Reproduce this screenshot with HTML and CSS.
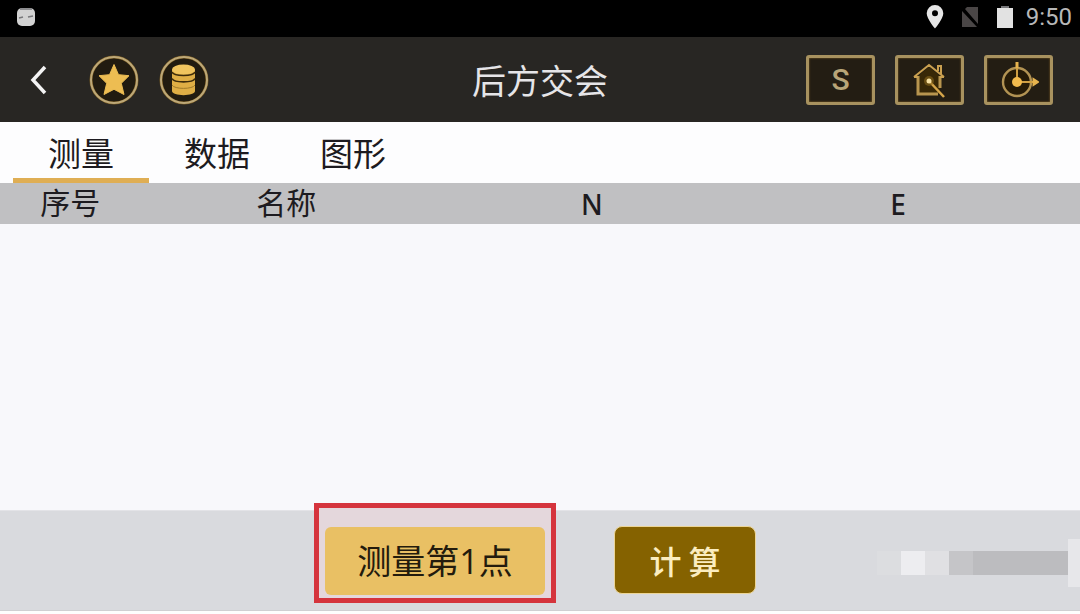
FILE: index.html
```html
<!DOCTYPE html>
<html lang="zh-CN">
<head>
<meta charset="utf-8">
<meta name="viewport" content="width=device-width, initial-scale=1">
<title>后方交会</title>
<link rel="stylesheet" href="styles.css">
</head>
<body>
<div class="app">
  <div class="status-bar">
    <svg class="status-app" width="20" height="20" viewBox="0 0 20 20" aria-hidden="true">
      <rect x="1" y="1" width="18" height="18" rx="5" fill="#d2d2d2"/>
      <path d="M4 2h12M3 11l4-1M12 10l5-1" stroke="#77777a" stroke-width="1.500" fill="none"/>
    </svg>
    <div class="status-right">
      <svg width="18" height="24" viewBox="0 0 18 24" aria-hidden="true">
        <path fill="#e6e6e6" fill-rule="evenodd" d="M9 0a8.300 8.300 0 0 0-8.300 8.300C.7 14 9 23.500 9 23.500S17.300 14 17.300 8.300A8.300 8.300 0 0 0 9 0zm0 5.300a3 3 0 1 1 0 6 3 3 0 0 1 0-6z"/>
      </svg>
      <svg width="18" height="22" viewBox="0 0 18 22" aria-hidden="true">
        <path fill="#4a4646" d="M6 1h11v17L4 3zM1 5l15 16H1z"/>
      </svg>
      <svg width="18" height="22" viewBox="0 0 18 22" aria-hidden="true">
        <path fill="#e2e2e2" d="M1 2h4V0h8v2h4v20H1z"/>
        <path fill="#77777a" d="M5 0h8v2H5z"/>
      </svg>
      <span class="clock">9:50</span>
    </div>
  </div>

  <header class="title-bar">
    <div class="title-left">
      <button class="icon-button back" type="button" aria-label="返回">
        <svg width="20" height="32" viewBox="0 0 20 32"><path d="M18 3L6 16l12 13" fill="none" stroke="#f4f4f4" stroke-width="3.500"/></svg>
      </button>
      <button class="icon-button" type="button" aria-label="收藏">
        <svg width="50" height="50" viewBox="0 0 50 50">
          <circle cx="25" cy="25" r="23" fill="#211b10" stroke="#7a5c22" stroke-width="3"/>
          <circle cx="25" cy="25" r="23" fill="none" stroke="#bda878" stroke-width="2"/>
          <path fill="#edbd52" stroke="#edbd52" stroke-linejoin="round" d="M25 9.500l4.500 10.200 10.500 1-7.700 7.600 2.700 11.200-10-5.200-10 5.200 2.700-11.200L10 20.700l10.500-1z"/>
        </svg>
      </button>
      <button class="icon-button" type="button" aria-label="数据库">
        <svg width="50" height="50" viewBox="0 0 50 50">
          <circle cx="25" cy="25" r="23" fill="#211b10" stroke="#7a5c22" stroke-width="3"/>
          <circle cx="25" cy="25" r="23" fill="none" stroke="#bda878" stroke-width="2"/>
          <path fill="#dfae45" d="M13 14.500h23V36c0 5.500-23 5.500-23 0z"/>
          <ellipse cx="24.500" cy="14.500" rx="11.500" ry="5" fill="#f0c45e"/>
          <path d="M13 17c2 4.700 21 4.700 23 0M13 23.500c2 4.500 21 4.500 23 0" fill="none" stroke="#3c2b0b" stroke-width="1.600"/>
          <path d="M13 30c2 4.500 21 4.500 23 0" fill="none" stroke="#a07b2a"/>
        </svg>
      </button>
    </div>
    <h1 class="title">后方交会</h1>
    <div class="title-right">
      <button class="tool" type="button">S</button>
      <button class="tool" type="button" aria-label="测站">
        <svg width="34" height="38" viewBox="0 0 34 38">
          <path fill="#382807" d="M5 15L16 6l11 9v18H5z"/>
          <path d="M5 15v18h20M27 15v12" fill="none" stroke="#b8954f" stroke-width="3"/>
          <path d="M1 16L16 4l15 12M1 16h4M27 16h4M25 10V5h3v8" fill="none" stroke="#caa050" stroke-width="2"/>
          <path d="M16 20l15 16" stroke="#d5a54a" stroke-width="2.500"/>
          <circle cx="16" cy="20" r="5" fill="#8b671d" opacity=".6"/>
          <circle cx="16" cy="20" r="2.500" fill="#f7e1a2"/>
        </svg>
      </button>
      <button class="tool" type="button" aria-label="定向">
        <svg width="40" height="40" viewBox="0 0 40 40">
          <circle cx="18" cy="22" r="14" fill="#261b07" stroke="#b29353" stroke-width="2.400"/>
          <path d="M18 3v19h20" fill="none" stroke="#cf9f43" stroke-width="2"/>
          <path d="M18 2v6M35 20l3 2-3 2z" fill="#e6b34e" stroke="#e6b34e" stroke-width="3"/>
          <circle cx="18" cy="22" r="5" fill="#f3bb4c"/>
        </svg>
      </button>
    </div>
  </header>

  <nav class="tabs" role="tablist">
    <button class="tab tab-active" type="button" role="tab" aria-selected="true">测量</button>
    <button class="tab" type="button" role="tab" aria-selected="false">数据</button>
    <button class="tab" type="button" role="tab" aria-selected="false">图形</button>
  </nav>

  <main class="content">
    <table class="points">
      <thead>
        <tr><th class="col-index">序号</th><th class="col-name">名称</th><th class="col-north">N</th><th class="col-east">E</th></tr>
      </thead>
      <tbody></tbody>
    </table>
  </main>

  <footer class="actions">
    <div class="highlight"><button class="action measure" type="button">测量第1点</button></div>
    <button class="action compute" type="button">计 算</button>
    <div class="mosaic" aria-hidden="true">
      <span class="block block-faint"></span><span class="block block-light"></span><span class="block block-pale"></span><span class="block block-mid"></span><span class="block block-dark"></span><span class="block block-edge"></span>
    </div>
  </footer>
</div>
</body>
</html>
```

FILE: styles.css
```css
* {
  box-sizing: border-box;
}

body {
  margin: 0;
  background: #fdfdfd;
  color: #1d1b20;
  font-family: "Noto Sans CJK SC", sans-serif;
}

button {
  margin: 0;
  padding: 0;
  border: 0;
  background: none;
  color: inherit;
  font: inherit;
  cursor: pointer;
}

svg {
  display: block;
}

.app {
  display: flex;
  flex-direction: column;
  min-height: 100vh;
  padding-bottom: 3px;
}

.status-bar {
  display: flex;
  align-items: center;
  justify-content: space-between;
  height: 37px;
  padding: 0 8px 4px 16px;
  background: #000;
}

.status-right {
  display: flex;
  align-items: center;
  gap: 17px;
}

.clock {
  margin-left: -5px;
  color: #b8b8b8;
  font: 24px/32px Roboto, sans-serif;
}

.title-bar {
  display: grid;
  grid-template-columns: 1fr auto 1fr;
  align-items: center;
  height: 85px;
  padding: 0 27px;
  background: #282623;
}

.title-left,
.title-right {
  display: flex;
  align-items: center;
  gap: 20px;
}

.title-right {
  justify-content: flex-end;
}

.back {
  margin-right: 22px;
}

.title {
  margin: 0;
  color: #e6e5e8;
  font-size: 34px;
  font-weight: 400;
  line-height: 48px;
}

.tool {
  display: flex;
  align-items: center;
  justify-content: center;
  width: 69px;
  height: 50px;
  border: 3px solid #a8925f;
  border-radius: 3px;
  background: #231d13;
  box-shadow: inset 0 0 2px #97702a;
  color: #b8a578;
  font: 500 30px/32px Roboto, sans-serif;
}

.tabs {
  display: flex;
  height: 61px;
  padding-left: 13px;
  background: #fdfdfe;
}

.tab {
  width: 136px;
  padding-top: 4px;
  border-bottom: 5px solid transparent;
  font-size: 33px;
  line-height: 48px;
}

.tab-active {
  border-bottom-color: #dfae54;
}

.content {
  flex: 1;
  background: #f8f8fb;
}

.points {
  width: 100%;
  border-collapse: collapse;
  table-layout: fixed;
  background: #c0c0c2;
}

.points th {
  height: 41px;
  padding: 0 0 5px;
  font-size: 30px;
  font-weight: 400;
  line-height: 36px;
}

.points .col-index {
  width: 13%;
}

.points .col-name {
  width: 27%;
}

.points .col-north,
.points .col-east {
  padding-bottom: 0;
  font-family: "Noto Sans", sans-serif;
  font-size: 28px;
  font-weight: 500;
}

.points .col-north {
  width: 30%;
  padding-right: 4px;
}

.points .col-east {
  padding-right: 40px;
}

.actions {
  position: relative;
  display: flex;
  align-items: center;
  justify-content: center;
  gap: 58px;
  height: 101px;
  padding: 0 10px 2px 0;
  border-top: 1px solid #e3e3e7;
  border-bottom: 1px solid #cfcfd2;
  background: #d9dade;
}

.action {
  height: 68px;
  border-radius: 6px;
  line-height: 48px;
}

.highlight {
  margin-top: -14px;
  padding: 19px 6px 3px;
  border: 5px solid #d5343d;
  background: #e4d7dc;
}

.measure {
  display: block;
  width: 220px;
  background: #e9c064;
  color: #231b0d;
  font-family: "Open Sans", "Noto Sans CJK SC", sans-serif;
  font-size: 34px;
}

.compute {
  width: 142px;
  border: 1px solid #ecd596;
  border-radius: 8px;
  background: #856200;
  color: #fbedc0;
  font-size: 32px;
  font-weight: 500;
}

.mosaic {
  position: absolute;
  right: 0;
  top: 28px;
  display: flex;
  align-items: center;
}

.block {
  width: 24px;
  height: 24px;
}

.block-faint {
  background: #dcdde0;
}

.block-light {
  background: #ededf0;
}

.block-pale {
  background: #e0e0e3;
}

.block-mid {
  background: #c5c5c8;
}

.block-dark {
  width: 95px;
  background: #bcbcbf;
}

.block-edge {
  width: 12px;
  height: 48px;
  background: #e7e7ea;
}
```
